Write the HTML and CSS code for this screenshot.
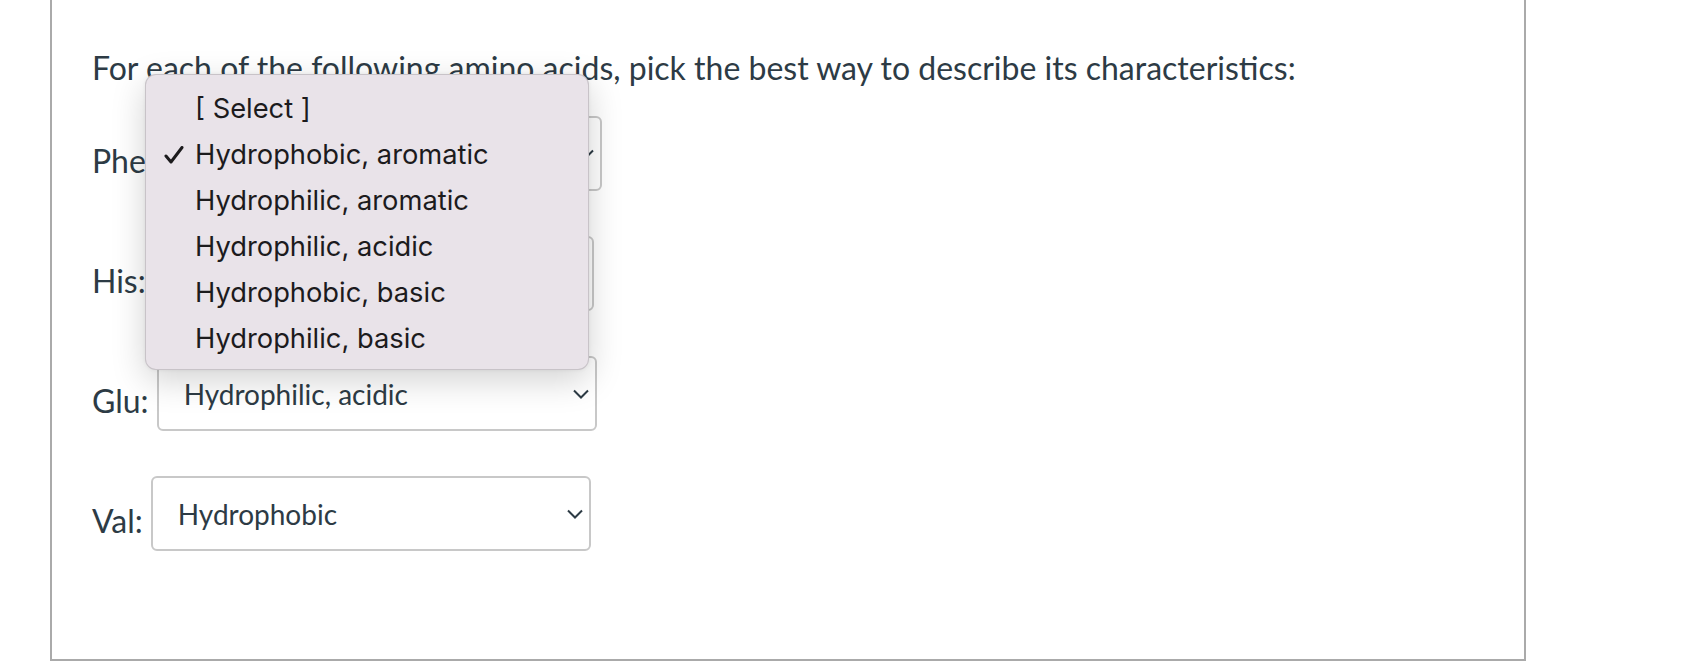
FILE: index.html
```html
<!DOCTYPE html>
<html lang="en">
<head>
<meta charset="utf-8">
<title>Quiz question</title>
<link rel="stylesheet" href="styles.css">
</head>
<body>
<div class="card">
  <p class="prompt">For each of the following amino acids, pick the best way to describe its characteristics:</p>
  <div class="rows">
    <div class="row">
      <span class="label">Phe:</span>
      <div class="select"><span class="value">Hydrophobic, aromatic</span><svg class="chev" width="16" height="10" viewBox="0 0 16 10"><path d="M1 1.5 L8 8.5 L15 1.5" fill="none" stroke="#2d3b45" stroke-width="2"/></svg></div>
    </div>
    <div class="row">
      <span class="label">His:</span>
      <div class="select"><span class="value">Hydrophilic, basic</span><svg class="chev" width="16" height="10" viewBox="0 0 16 10"><path d="M1 1.5 L8 8.5 L15 1.5" fill="none" stroke="#2d3b45" stroke-width="2"/></svg></div>
    </div>
    <div class="row">
      <span class="label">Glu:</span>
      <div class="select"><span class="value">Hydrophilic, acidic</span><svg class="chev" width="16" height="10" viewBox="0 0 16 10"><path d="M1 1.5 L8 8.5 L15 1.5" fill="none" stroke="#2d3b45" stroke-width="2"/></svg></div>
    </div>
    <div class="row">
      <span class="label">Val:</span>
      <div class="select"><span class="value">Hydrophobic</span><svg class="chev" width="16" height="10" viewBox="0 0 16 10"><path d="M1 1.5 L8 8.5 L15 1.5" fill="none" stroke="#2d3b45" stroke-width="2"/></svg></div>
    </div>
  </div>
  <ul class="menu">
    <li class="item">[ Select ]</li>
    <li class="item"><svg class="check" width="20" height="18" viewBox="0 0 20 18"><path d="M2 10 L7 16 L18 1.5" fill="none" stroke="#1c1b1d" stroke-width="3" stroke-linecap="round" stroke-linejoin="round"/></svg>Hydrophobic, aromatic</li>
    <li class="item">Hydrophilic, aromatic</li>
    <li class="item">Hydrophilic, acidic</li>
    <li class="item">Hydrophobic, basic</li>
    <li class="item">Hydrophilic, basic</li>
  </ul>
</div>
</body>
</html>
```

FILE: styles.css
```css
html, body {
  margin: 0;
  padding: 0;
  background: #ffffff;
}

body {
  font-family: Lato, "Open Sans", sans-serif;
  color: #2d3b45;
}

.card {
  position: relative;
  box-sizing: border-box;
  margin-left: 50px;
  width: 1476px;
  height: 661px;
  border: 2px solid #aaaaaa;
  border-top: none;
  padding: 45px 0 0 40px;
}

.prompt {
  margin: 0;
  font-size: 32px;
  line-height: 45px;
}

.rows {
  margin-top: 26px;
  display: flex;
  flex-direction: column;
  gap: 45px;
}

.row {
  display: flex;
  align-items: center;
  height: 75px;
}

.label {
  font-size: 32px;
  line-height: 45px;
  padding-top: 14px;
  margin-right: 8px;
}

.select {
  box-sizing: border-box;
  width: 440px;
  height: 75px;
  border: 2px solid #c8c8c8;
  border-radius: 6px;
  display: flex;
  align-items: center;
  justify-content: space-between;
  padding: 0 6px 0 25px;
  font-size: 28px;
  background: #ffffff;
}

.value {
  line-height: 1;
}

.menu {
  position: absolute;
  left: 93px;
  top: 74px;
  box-sizing: border-box;
  width: 444px;
  height: 296px;
  margin: 0;
  padding: 11px 0 9px 0;
  list-style: none;
  background: #e9e3e9;
  border: 1px solid rgba(0, 0, 0, 0.14);
  border-radius: 11px;
  box-shadow: 0 10px 34px rgba(0, 0, 0, 0.18), 0 0 4px rgba(0, 0, 0, 0.06);
  font-family: Inter, "Noto Sans", sans-serif;
  font-size: 27.3px;
  color: #1c1b1d;
}

.item {
  position: relative;
  height: 46px;
  line-height: 46px;
  padding-left: 49px;
  white-space: nowrap;
}

.check {
  position: absolute;
  left: 18px;
  top: 14px;
}
```
